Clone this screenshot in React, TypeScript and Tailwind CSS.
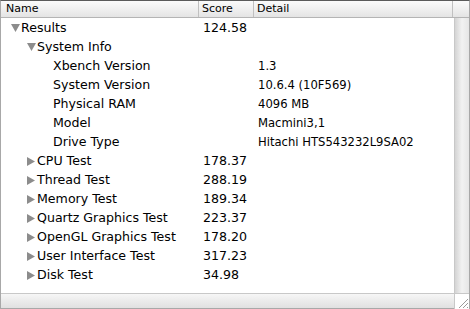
import React from "react";

type Row = {
  name: string;
  score?: string;
  detail?: string;
  level: number;
  tri?: "open" | "closed";
};

const rows: Row[] = [
  { name: "Results", score: "124.58", level: 0, tri: "open" },
  { name: "System Info", level: 1, tri: "open" },
  { name: "Xbench Version", detail: "1.3", level: 2 },
  { name: "System Version", detail: "10.6.4 (10F569)", level: 2 },
  { name: "Physical RAM", detail: "4096 MB", level: 2 },
  { name: "Model", detail: "Macmini3,1", level: 2 },
  { name: "Drive Type", detail: "Hitachi HTS543232L9SA02", level: 2 },
  { name: "CPU Test", score: "178.37", level: 1, tri: "closed" },
  { name: "Thread Test", score: "288.19", level: 1, tri: "closed" },
  { name: "Memory Test", score: "189.34", level: 1, tri: "closed" },
  { name: "Quartz Graphics Test", score: "223.37", level: 1, tri: "closed" },
  { name: "OpenGL Graphics Test", score: "178.20", level: 1, tri: "closed" },
  { name: "User Interface Test", score: "317.23", level: 1, tri: "closed" },
  { name: "Disk Test", score: "34.98", level: 1, tri: "closed" },
];

function Triangle({ kind }: { kind: "open" | "closed" }) {
  return kind === "open" ? (
    <svg width="9" height="8" viewBox="0 0 9 8" className="shrink-0">
      <polygon points="0,0 9,0 4.5,8" fill="#8c8c8c" />
    </svg>
  ) : (
    <svg width="8" height="9" viewBox="0 0 8 9" className="shrink-0">
      <polygon points="0,0 8,4.5 0,9" fill="#8c8c8c" />
    </svg>
  );
}

const indentClass = ["pl-[10px]", "pl-[26px]", "pl-[52px]"];

export default function App() {
  return (
    <div
      className="w-[470px] h-[309px] bg-white flex flex-col border-t border-t-[#5a5a5a] border-l border-l-[#a8a8a8] border-r border-r-[#a8a8a8] overflow-hidden text-black"
      style={{ fontFamily: '"DejaVu Sans", "Liberation Sans", sans-serif' }}
    >
      {/* Header */}
      <div className="h-[17px] shrink-0 flex bg-gradient-to-b from-[#fbfbfb] to-[#e4e4e4] border-b border-b-[#b4b4b4] text-[11px] leading-[16px]">
        <div className="w-[198px] shrink-0 pl-[5px] border-r border-r-[#c0c0c0]">Name</div>
        <div className="w-[55px] shrink-0 pl-[3px] border-r border-r-[#c0c0c0]">Score</div>
        <div className="w-[199px] shrink-0 pl-[3px] border-r border-r-[#c0c0c0]">Detail</div>
        <div className="flex-1" />
      </div>

      {/* Body */}
      <div className="flex-1 flex min-h-0">
        <div className="flex-1 pt-[1px] text-[12.6px]">
          {rows.map((r) => (
            <div key={r.name} className="h-[19px] flex items-center">
              <div className={`w-[199px] shrink-0 flex items-center ${indentClass[r.level]}`}>
                {r.tri ? (
                  <span className="w-[10px] flex items-center">
                    <Triangle kind={r.tri} />
                  </span>
                ) : null}
                <span className="whitespace-nowrap">{r.name}</span>
              </div>
              <div className="w-[55px] shrink-0 pl-[3px]">{r.score ?? ""}</div>
              <div className="flex-1 pl-[3px] whitespace-nowrap text-[11.6px]">{r.detail ?? ""}</div>
            </div>
          ))}
        </div>
        <div className="w-[15px] shrink-0 bg-gradient-to-r from-[#d4d4d4] via-[#f2f2f2] to-[#e6e6e6] border-l border-l-[#c8c8c8]" />
      </div>

      {/* Bottom scrollbar */}
      <div className="h-[16px] shrink-0 flex border-t border-t-[#c8c8c8]">
        <div className="flex-1 bg-gradient-to-b from-[#f6f6f6] to-[#e0e0e0] border-b border-b-[#a8a8a8]" />
        <div className="w-[15px] shrink-0 bg-white border-l border-l-[#c8c8c8] flex items-end justify-end">
          <svg width="12" height="12" viewBox="0 0 12 12">
            <line x1="11" y1="2" x2="2" y2="11" stroke="#9a9a9a" strokeWidth="1" />
            <line x1="11" y1="6" x2="6" y2="11" stroke="#9a9a9a" strokeWidth="1" />
            <line x1="11" y1="10" x2="10" y2="11" stroke="#9a9a9a" strokeWidth="1" />
          </svg>
        </div>
      </div>
    </div>
  );
}
